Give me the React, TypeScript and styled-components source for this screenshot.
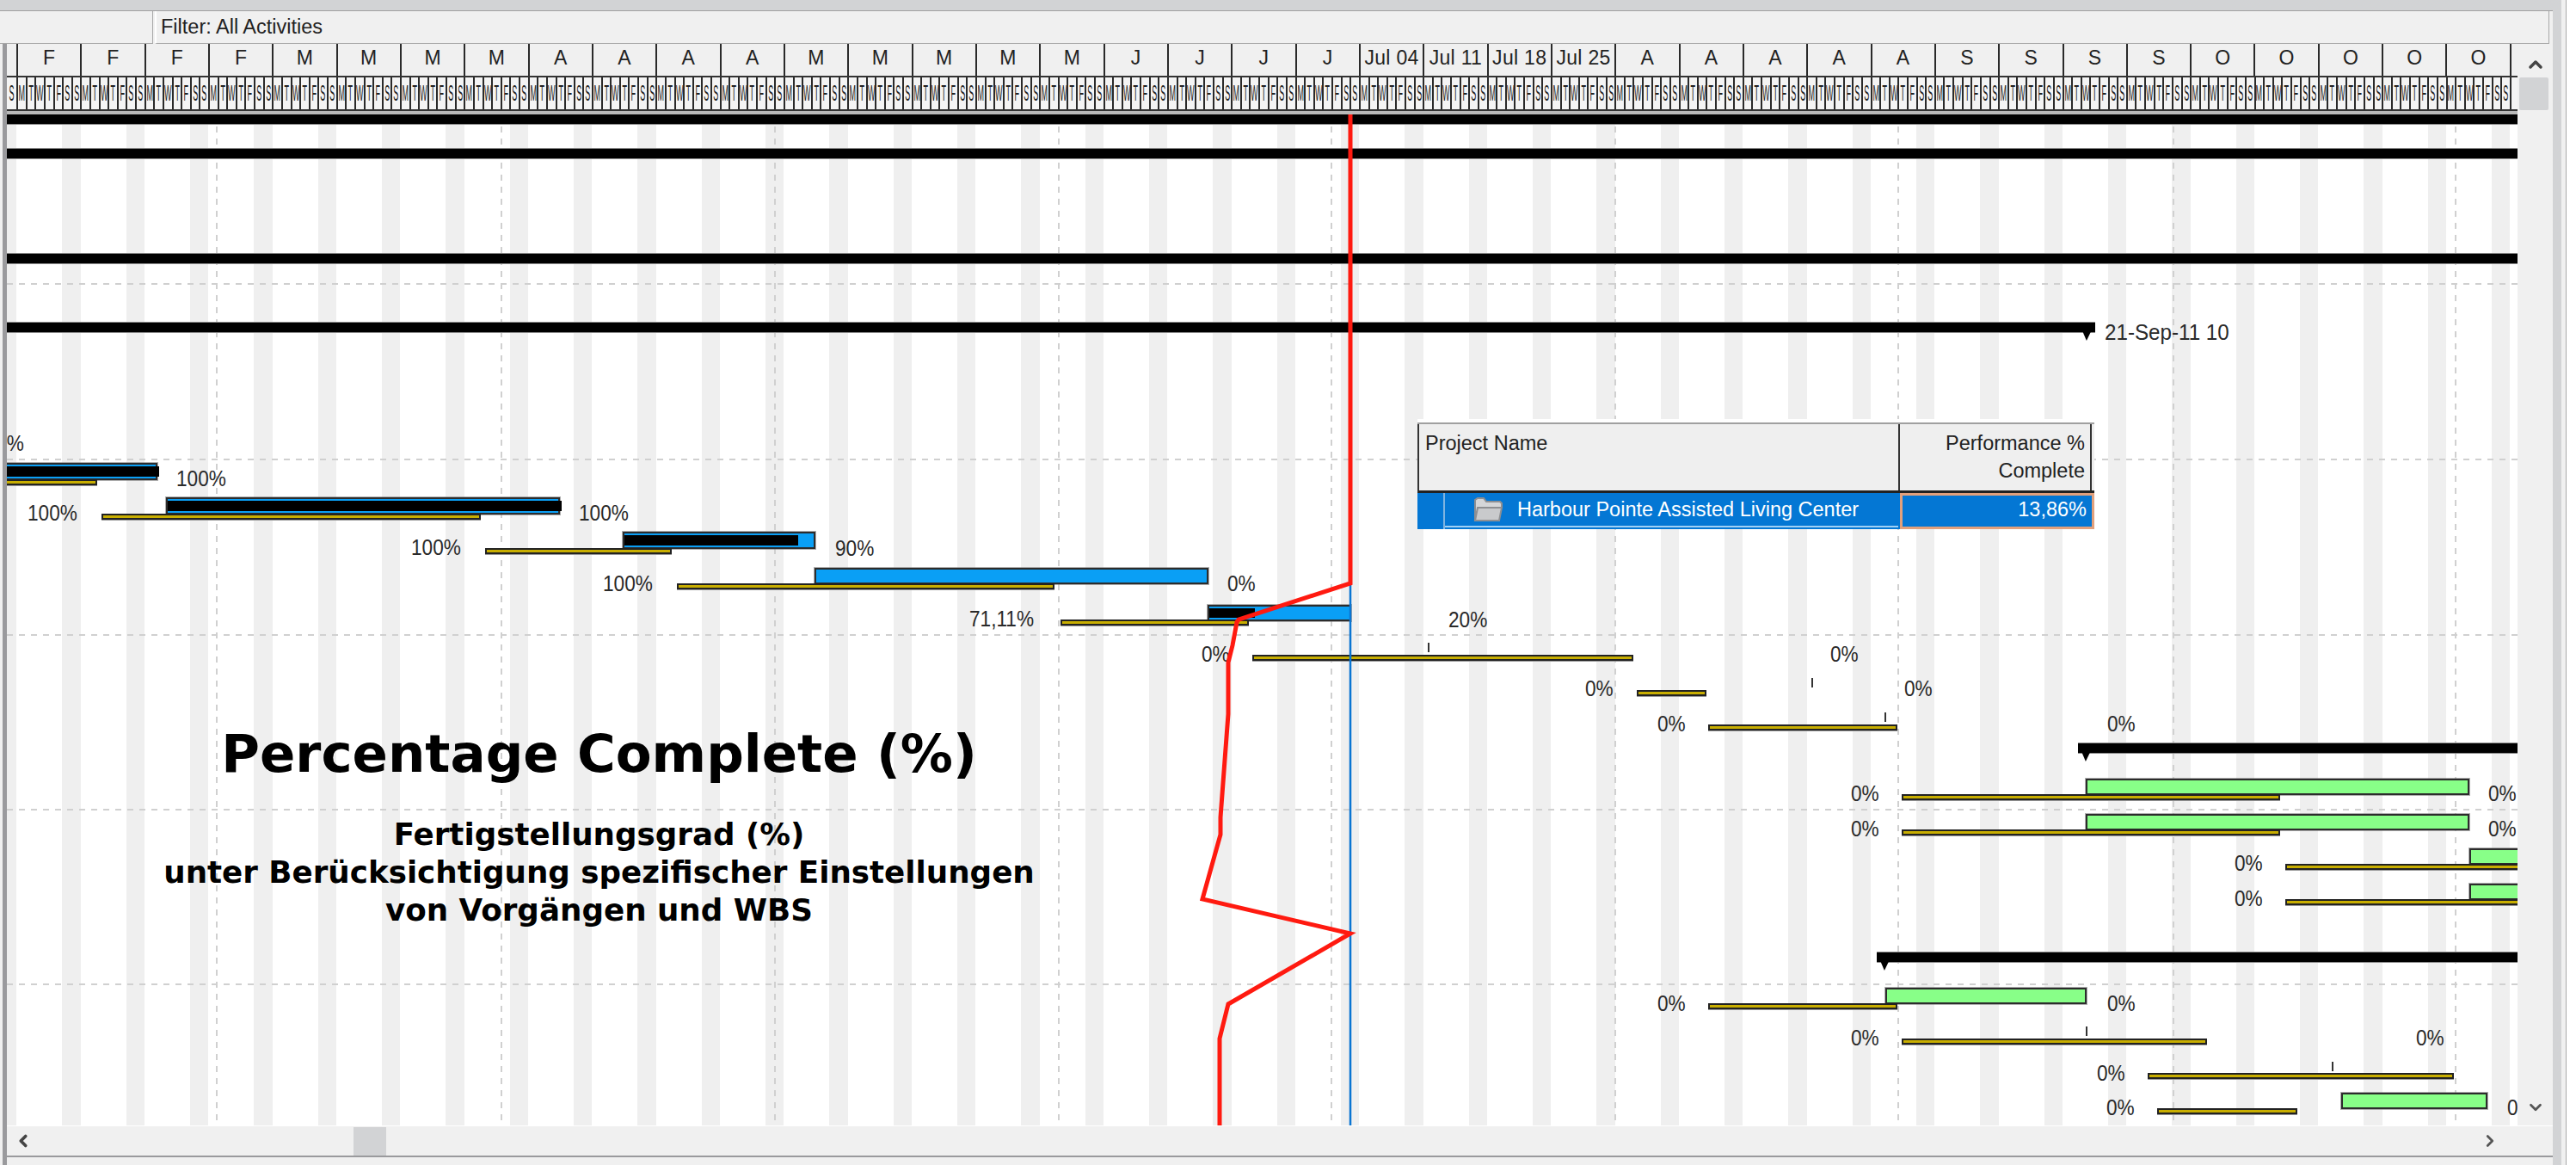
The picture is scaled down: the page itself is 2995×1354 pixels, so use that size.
import React from 'react'
import styled, { createGlobalStyle } from 'styled-components'
import { ChevronDown, ChevronLeft, ChevronRight, ChevronUp } from 'lucide-react'

const CHART_X = 8
const CHART_Y = 133
const CHART_W = 2919
const CHART_H = 1175

const GlobalStyle = createGlobalStyle`
  html, body {
    margin: 0;
    padding: 0;
    background: #fff;
    overflow: hidden;
  }
  * {
    box-sizing: border-box;
  }
`

const Page = styled.div`
  display: flex;
  width: 2995px;
  height: 1354px;
  background: #fff;
  font-family: 'Liberation Sans', Arial, sans-serif;
  color: #222;
  overflow: hidden;
`

const Main = styled.div`
  display: flex;
  flex-direction: column;
  width: 2968px;
  background: #f0f0f0;
`

const SideBand = styled.div`
  width: 10px;
  background: #d2d3d5;
`

const SideEdge = styled.div`
  width: 6px;
  background: #f0f0f0;
  border-right: 1px solid #a8a8a8;
`

const TopBand = styled.div`
  height: 13px;
  background: #d2d3d5;
  border-bottom: 1px solid #a0a0a0;
`

const FilterRow = styled.div`
  display: flex;
  height: 38px;
  padding-right: 4px;
`

const FilterBlank = styled.div`
  width: 178px;
  border-right: 1px solid #a8a8a8;
  border-bottom: 1px solid #a8a8a8;
`

const FilterCell = styled.div`
  flex: 1;
  margin-left: 2px;
  padding: 0 0 0 5px;
  font-size: 23.5px;
  line-height: 36px;
  border-left: 2px solid #fff;
  border-right: 1px solid #a8a8a8;
  border-bottom: 1px solid #a8a8a8;
`

const Body = styled.div`
  display: flex;
  flex: 1;
  min-height: 0;
`

const LeftRail = styled.div`
  width: 8px;
  border-left: 3px solid #f0f0f0;
  background: #9a9a9d;
`

const Workspace = styled.div`
  display: flex;
  flex-direction: column;
  flex: 1;
  min-width: 0;
`

const Upper = styled.div`
  display: flex;
  flex: 1;
  min-height: 0;
`

const TimeColumn = styled.div`
  display: flex;
  flex-direction: column;
  width: ${CHART_W}px;
`

const TimeGrid = styled.div`
  display: grid;
  grid-template-columns: 13px repeat(39, 74.33px);
`

const WeekRow = styled(TimeGrid)`
  height: 39px;
  border-bottom: 2px solid #333;
`

const WeekCell = styled.div`
  border-right: 2px solid #2a2a2a;
  font-size: 23px;
  line-height: 32px;
  text-align: center;
  letter-spacing: 0.3px;
  white-space: nowrap;
`

const DayRow = styled(TimeGrid)`
  height: 39px;
  background: #f4f4f4;
  border-bottom: 2px solid #333;
`

const WeekDays = styled.div`
  display: flex;
`

const DayCell = styled.div`
  flex: 1;
  min-width: 0;
  border-right: 2px solid #2a2a2a;
  font-size: 25px;
  line-height: 37px;

  span {
    display: flex;
    justify-content: center;
    transform: scaleX(0.36);
  }
`

const TimeGap = styled.div`
  height: 4px;
  background: #b8b8b8;
`

const Chart = styled.div`
  position: relative;
  width: ${CHART_W}px;
  height: ${CHART_H}px;
  overflow: hidden;
  background: repeating-linear-gradient(
    90deg,
    #efefef 0 11.5px,
    #fff 11.5px 64.5px,
    #efefef 64.5px 74.33px
  );
`

const Overlay = styled.svg`
  position: absolute;
  left: 0;
  top: 0;
`

const Summary = styled.div`
  position: absolute;
  height: 11px;
  background: #000;
  box-shadow: 0 -1px 0 #8a8a8a, 0 1px 0 #8a8a8a;
`

const SummaryArrow = styled.div<{ $side: 'left' | 'right' }>`
  position: absolute;
  top: 0;
  ${(p) => (p.$side === 'left' ? 'left: 0;' : 'right: 0;')}
  width: 19px;
  height: 21px;
  background: #000;
  clip-path: polygon(0 0, 100% 0, 47% 100%);
`

const TaskBar = styled.div<{ $fill: string }>`
  position: absolute;
  background: ${(p) => p.$fill};
  border: 2px solid #2c2c2c;
  box-shadow: 0 0 0 1px rgba(110, 110, 110, 0.55);
`

const Progress = styled.div`
  position: absolute;
  left: 0;
  top: 2px;
  bottom: 2px;
  background: #000;
`

const Baseline = styled.div`
  position: absolute;
  height: 7px;
  background: #c8ae00;
  border: 2px solid #222;
  box-shadow: 0 1px 0 #999;
`

const Tick = styled.div`
  position: absolute;
  width: 2px;
  height: 11px;
  background: #333;
`

const Label = styled.div`
  position: absolute;
  font-size: 26px;
  line-height: 22px;
  white-space: nowrap;
  color: #2a2a2a;
  transform: scaleX(0.87);
  transform-origin: left center;
`

const DateLabel = styled(Label)`
  transform: scaleX(0.93);
`

const Headline = styled.div`
  position: absolute;
  left: 0;
  top: 710px;
  width: 1377px;
  text-align: center;
  font-family: 'DejaVu Sans', sans-serif;
  font-weight: 700;
  color: #000;
`

const HeadlineMain = styled.div`
  font-size: 61px;
  line-height: 66px;
`

const HeadlineSub = styled.div`
  margin-top: 39px;
  font-size: 35.7px;
  line-height: 44px;
`

const Popup = styled.div`
  position: absolute;
  left: ${1648 - CHART_X}px;
  top: ${487 - CHART_Y}px;
  width: 787px;
`

const PopupStrip = styled.div`
  height: 6px;
  background: #fff;
  border-bottom: 2px solid #a0a0a0;
`

const PopupHead = styled.div`
  display: grid;
  grid-template-columns: 559px 1fr;
  height: 80px;
  background: #efefef;
  border-left: 2px solid #333;
  border-bottom: 3px solid #222;
  font-size: 23.5px;
  line-height: 32px;
`

const PopupName = styled.div`
  padding: 6px 0 0 7px;
  border-right: 2px solid #333;
`

const PopupPerf = styled.div`
  padding: 6px 6px 0 0;
  text-align: right;
  border-right: 2px solid #333;
  margin-right: 3px;
`

const PopupRow = styled.div`
  display: grid;
  grid-template-columns: 32px 527px 1fr;
  height: 42px;
  background: #0477d4;
  color: #fff;
  font-size: 23.5px;
`

const PopupIndent = styled.div`
  border-right: 2px solid #7fb4e0;
`

const PopupTitle = styled.div`
  display: flex;
  align-items: center;
  gap: 16px;
  padding-left: 33px;
  height: 40px;
  border-bottom: 2px solid #9fd0f5;
`

const PopupValue = styled.div`
  margin-left: 2px;
  padding-right: 6px;
  border: 3px solid #e2a07c;
  line-height: 32px;
  text-align: right;
`

const VScroll = styled.div`
  display: flex;
  flex-direction: column;
  align-items: center;
  justify-content: space-between;
  width: 41px;
  padding: 12px 0 10px;
  position: relative;
`

const VThumb = styled.div`
  position: absolute;
  left: 2px;
  top: 39px;
  width: 34px;
  height: 38px;
  border-radius: 2px;
  background: #d2d3d5;
`

const HScroll = styled.div`
  display: flex;
  align-items: center;
  justify-content: space-between;
  height: 37px;
  padding: 0 62px 0 8px;
  position: relative;
  border-top: 1px solid #fff;
  border-bottom: 2px solid #9a9a9d;
`

const HThumb = styled.div`
  position: absolute;
  left: 403px;
  top: 1px;
  width: 38px;
  height: 33px;
  background: #d2d3d5;
`

const Footer = styled.div`
  height: 9px;
`

const weeks = [
  'F', 'F', 'F', 'F', 'M', 'M', 'M', 'M', 'A', 'A', 'A', 'A', 'M', 'M', 'M', 'M', 'M', 'J', 'J', 'J', 'J',
  'Jul 04', 'Jul 11', 'Jul 18', 'Jul 25', 'A', 'A', 'A', 'A', 'A', 'S', 'S', 'S', 'S', 'O', 'O', 'O', 'O', 'O',
]
const dayLetters = ['M', 'T', 'W', 'T', 'F', 'S', 'S']

const monthLines = [252, 583, 901, 1231, 1548, 1878, 2207, 2527, 2855]
const rowLines = [330, 534, 738, 941, 1144]

// all coordinates below are page pixels, converted to the chart on render
const summaries = [
  { x1: 8, x2: 2927, y: 133 },
  { x1: 8, x2: 2927, y: 173 },
  { x1: 8, x2: 2927, y: 295 },
  { x1: 8, x2: 2436, y: 375, arrow: 'right' as const },
  { x1: 2416, x2: 2927, y: 864, arrow: 'left' as const },
  { x1: 2182, x2: 2927, y: 1107, arrow: 'left' as const },
]

const BLUE = '#0a9ff5'
const GREEN = '#88ff88'

const bars = [
  { x1: 2, x2: 183, y1: 538, y2: 558, fill: BLUE, done: 181 },
  { x1: 193, x2: 651, y1: 578, y2: 598, fill: BLUE, done: 458 },
  { x1: 724, x2: 948, y1: 618, y2: 638, fill: BLUE, done: 202 },
  { x1: 947, x2: 1405, y1: 660, y2: 679, fill: BLUE, done: 0 },
  { x1: 1404, x2: 1571, y1: 703, y2: 722, fill: BLUE, done: 53 },
  { x1: 2425, x2: 2871, y1: 905, y2: 924, fill: GREEN, done: 0 },
  { x1: 2425, x2: 2871, y1: 946, y2: 965, fill: GREEN, done: 0 },
  { x1: 2871, x2: 2940, y1: 986, y2: 1005, fill: GREEN, done: 0 },
  { x1: 2871, x2: 2940, y1: 1027, y2: 1046, fill: GREEN, done: 0 },
  { x1: 2192, x2: 2426, y1: 1148, y2: 1167, fill: GREEN, done: 0 },
  { x1: 2722, x2: 2892, y1: 1270, y2: 1289, fill: GREEN, done: 0 },
]

const baselines = [
  { x1: 2, x2: 113, y: 557 },
  { x1: 118, x2: 559, y: 597 },
  { x1: 564, x2: 781, y: 637 },
  { x1: 787, x2: 1226, y: 678 },
  { x1: 1233, x2: 1452, y: 720 },
  { x1: 1456, x2: 1899, y: 761 },
  { x1: 1903, x2: 1984, y: 802 },
  { x1: 1986, x2: 2206, y: 842 },
  { x1: 2211, x2: 2651, y: 923 },
  { x1: 2211, x2: 2651, y: 964 },
  { x1: 2657, x2: 2940, y: 1004 },
  { x1: 2657, x2: 2940, y: 1045 },
  { x1: 1986, x2: 2206, y: 1166 },
  { x1: 2211, x2: 2566, y: 1207 },
  { x1: 2497, x2: 2853, y: 1247 },
  { x1: 2508, x2: 2671, y: 1288 },
]

const ticks = [
  { x: 1660, y: 747 },
  { x: 2106, y: 788 },
  { x: 2191, y: 828 },
  { x: 2425, y: 1193 },
  { x: 2711, y: 1234 },
]

const labels = [
  { x: -30, y: 504, text: '100%' },
  { x: 205, y: 545, text: '100%' },
  { x: 32, y: 585, text: '100%' },
  { x: 673, y: 585, text: '100%' },
  { x: 478, y: 625, text: '100%' },
  { x: 971, y: 626, text: '90%' },
  { x: 701, y: 667, text: '100%' },
  { x: 1427, y: 667, text: '0%' },
  { x: 1127, y: 708, text: '71,11%' },
  { x: 1684, y: 709, text: '20%' },
  { x: 1397, y: 749, text: '0%' },
  { x: 2128, y: 749, text: '0%' },
  { x: 1843, y: 789, text: '0%' },
  { x: 2214, y: 789, text: '0%' },
  { x: 1927, y: 830, text: '0%' },
  { x: 2450, y: 830, text: '0%' },
  { x: 2152, y: 911, text: '0%' },
  { x: 2893, y: 911, text: '0%' },
  { x: 2152, y: 952, text: '0%' },
  { x: 2893, y: 952, text: '0%' },
  { x: 2598, y: 992, text: '0%' },
  { x: 2598, y: 1033, text: '0%' },
  { x: 1927, y: 1155, text: '0%' },
  { x: 2450, y: 1155, text: '0%' },
  { x: 2152, y: 1195, text: '0%' },
  { x: 2809, y: 1195, text: '0%' },
  { x: 2438, y: 1236, text: '0%' },
  { x: 2449, y: 1276, text: '0%' },
  { x: 2915, y: 1276, text: '0%' },
]

const curve = [
  [1570, 133], [1570, 678], [1440, 720], [1438, 723], [1433, 750], [1428, 770], [1428, 830],
  [1419, 950], [1419, 970], [1398, 1045], [1570, 1085], [1428, 1167], [1418, 1207], [1418, 1308],
]
  .map(([x, y]) => `${x - CHART_X},${y - CHART_Y}`)
  .join(' ')

const FolderIcon = () => (
  <svg width="35" height="29" viewBox="0 0 35 29">
    <path d="M2 27V3l3-2h7l3 4h16l2 2v4" fill="#d5d6d8" stroke="#8e8f92" strokeWidth="2" />
    <path d="M2 27l3-15h28l-3 15z" fill="#c9cacc" stroke="#8e8f92" strokeWidth="2" />
  </svg>
)

export default function App() {
  return (
    <Page>
      <GlobalStyle />
      <Main>
        <TopBand />
        <FilterRow>
          <FilterBlank />
          <FilterCell>Filter: All Activities</FilterCell>
        </FilterRow>
        <Body>
          <LeftRail />
          <Workspace>
            <Upper>
              <TimeColumn>
                <WeekRow>
                  <WeekCell />
                  {weeks.map((w, i) => (
                    <WeekCell key={i}>{w}</WeekCell>
                  ))}
                </WeekRow>
                <DayRow>
                  <DayCell>
                    <span>S</span>
                  </DayCell>
                  {weeks.map((_, i) => (
                    <WeekDays key={i}>
                      {dayLetters.map((d, j) => (
                        <DayCell key={j}>
                          <span>{d}</span>
                        </DayCell>
                      ))}
                    </WeekDays>
                  ))}
                </DayRow>
                <TimeGap />
                <Chart>
                  <Overlay width={CHART_W} height={CHART_H}>
                    {monthLines.map((x) => (
                      <line key={x} x1={x - CHART_X} x2={x - CHART_X} y1={0} y2={CHART_H} stroke="#d0d0d0" strokeWidth="2" strokeDasharray="7 7" />
                    ))}
                    {rowLines.map((y) => (
                      <line key={y} x1={0} x2={CHART_W} y1={y - CHART_Y} y2={y - CHART_Y} stroke="#d0d0d0" strokeWidth="2" strokeDasharray="7 7" />
                    ))}
                  </Overlay>
                  {summaries.map((s) => (
                    <Summary key={s.y} style={{ left: s.x1 - CHART_X, top: s.y - CHART_Y, width: s.x2 - s.x1 }}>
                      {s.arrow && <SummaryArrow $side={s.arrow} />}
                    </Summary>
                  ))}
                  {bars.map((b) => (
                    <TaskBar
                      key={`${b.x1}-${b.y1}`}
                      $fill={b.fill}
                      style={{ left: b.x1 - CHART_X, top: b.y1 - CHART_Y, width: b.x2 - b.x1, height: b.y2 - b.y1 }}
                    >
                      {b.done > 0 && <Progress style={{ width: b.done }} />}
                    </TaskBar>
                  ))}
                  {baselines.map((b) => (
                    <Baseline key={`${b.x1}-${b.y}`} style={{ left: b.x1 - CHART_X, top: b.y - CHART_Y, width: b.x2 - b.x1 }} />
                  ))}
                  {ticks.map((t) => (
                    <Tick key={t.x} style={{ left: t.x - CHART_X, top: t.y - CHART_Y }} />
                  ))}
                  {labels.map((l) => (
                    <Label key={`${l.x}-${l.y}`} style={{ left: l.x - CHART_X, top: l.y - CHART_Y }}>
                      {l.text}
                    </Label>
                  ))}
                  <DateLabel style={{ left: 2447 - CHART_X, top: 375 - CHART_Y }}>21-Sep-11 10</DateLabel>
                  <Overlay width={CHART_W} height={CHART_H}>
                    <line x1={1562} x2={1562} y1={545} y2={CHART_H} stroke="#0a75d2" strokeWidth="2.5" />
                    <polyline points={curve} fill="none" stroke="#ff1a10" strokeWidth="5" />
                  </Overlay>
                  <Headline>
                    <HeadlineMain>Percentage Complete (%)</HeadlineMain>
                    <HeadlineSub>
                      Fertigstellungsgrad (%)
                      <br />
                      unter Berücksichtigung spezifischer Einstellungen
                      <br />
                      von Vorgängen und WBS
                    </HeadlineSub>
                  </Headline>
                  <Popup>
                    <PopupStrip />
                    <PopupHead>
                      <PopupName>Project Name</PopupName>
                      <PopupPerf>
                        Performance %
                        <br />
                        Complete
                      </PopupPerf>
                    </PopupHead>
                    <PopupRow>
                      <PopupIndent />
                      <PopupTitle>
                        <FolderIcon />
                        Harbour Pointe Assisted Living Center
                      </PopupTitle>
                      <PopupValue>13,86%</PopupValue>
                    </PopupRow>
                  </Popup>
                </Chart>
              </TimeColumn>
              <VScroll>
                <ChevronUp size={24} strokeWidth={3.5} color="#444" />
                <VThumb />
                <ChevronDown size={22} strokeWidth={3} color="#555" />
              </VScroll>
            </Upper>
            <HScroll>
              <ChevronLeft size={22} strokeWidth={4} color="#444" />
              <HThumb />
              <ChevronRight size={22} strokeWidth={3} color="#555" />
            </HScroll>
            <Footer />
          </Workspace>
        </Body>
      </Main>
      <SideBand />
      <SideEdge />
    </Page>
  )
}
